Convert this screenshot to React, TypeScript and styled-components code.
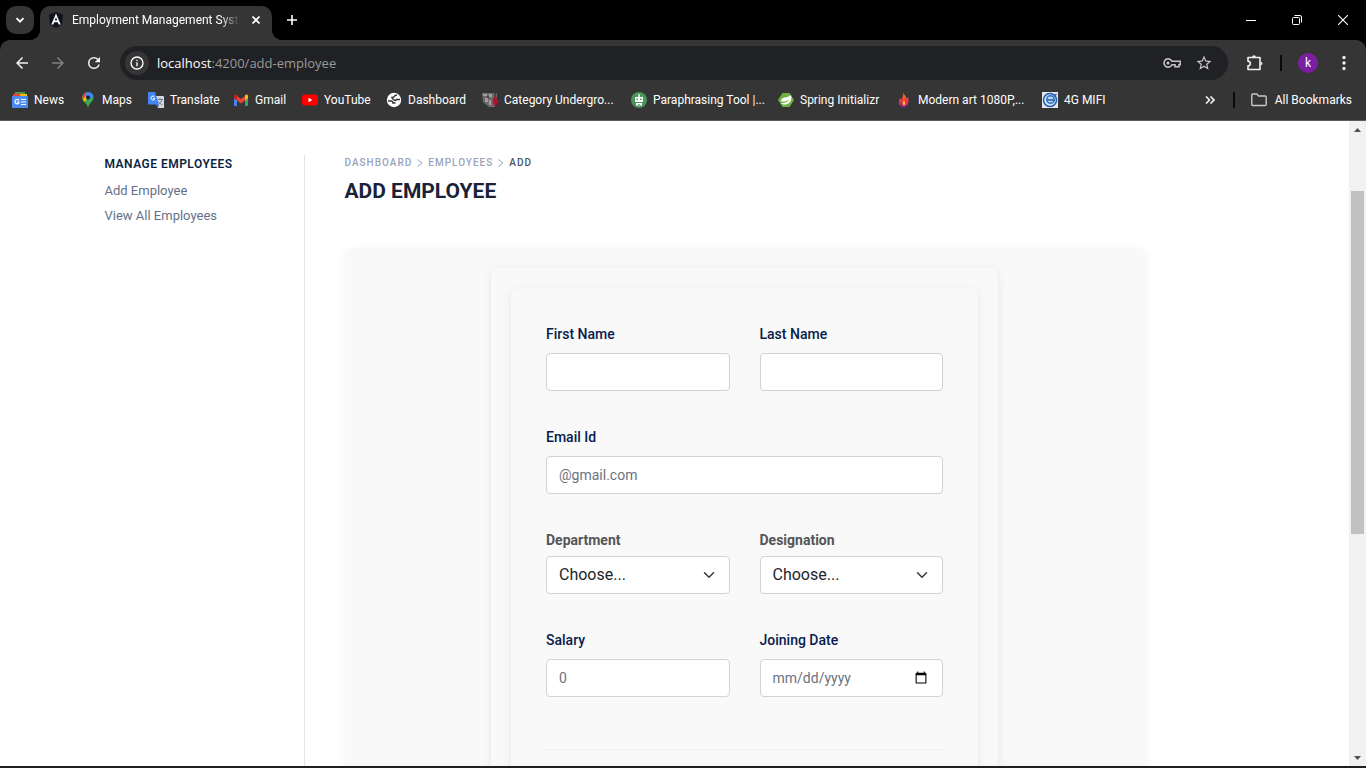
import React from "react";
import styled, { createGlobalStyle } from "styled-components";

const GlobalStyle = createGlobalStyle`
  *, *::before, *::after { box-sizing: border-box; }
  body { margin: 0; background: #fff; }
  button { font: inherit; color: inherit; border: 0; background: none; padding: 0; cursor: pointer; }
  a { color: inherit; text-decoration: none; }
  svg { display: block; flex: none; }
`;

/* ---------- browser frame ---------- */

const Browser = styled.div`
  display: flex;
  flex-direction: column;
  height: 100vh;
  overflow: hidden;
  background: #353535;
  color: #fff;
  font-family: Roboto, "Noto Sans", sans-serif;
  font-size: 12px;
  line-height: 16px;
`;

const TabStrip = styled.div`
  display: flex;
  height: 40px;
  padding-left: 6px;
  background: #000;
`;

const TabSearch = styled.button`
  display: grid;
  place-items: center;
  width: 28px;
  height: 28px;
  margin: 6px 6px 0 0;
  border-radius: 10px;
  background: #353535;
`;

const Tab = styled.div`
  position: relative;
  display: flex;
  align-items: center;
  gap: 8px;
  width: 232px;
  height: 34px;
  margin-top: 6px;
  padding: 0 8px 6px;
  border-radius: 10px 10px 0 0;
  background: #353535;

  &::before,
  &::after {
    content: "";
    position: absolute;
    bottom: 0;
    width: 10px;
    height: 10px;
  }
  &::before {
    left: -10px;
    background: radial-gradient(circle at 0 0, transparent 10px, #353535 10px);
  }
  &::after {
    right: -10px;
    background: radial-gradient(circle at 100% 0, transparent 10px, #353535 10px);
  }
`;

const TabTitle = styled.span`
  flex: 1;
  min-width: 0;
  overflow: hidden;
  white-space: nowrap;
  mask-image: linear-gradient(to right, #000 88%, transparent);
`;

const SmallButton = styled.button`
  display: grid;
  place-items: center;
  width: 16px;
  height: 16px;
`;

const NewTab = styled.button`
  display: grid;
  place-items: center;
  width: 28px;
  height: 28px;
  margin: 6px 0 0 6px;
`;

const WindowControls = styled.div`
  display: flex;
  margin-left: auto;
`;

const WindowButton = styled.button`
  display: grid;
  place-items: center;
  width: 46px;
  height: 40px;
`;

const ToolbarBack = styled.div`
  background: #000;
`;

const Toolbar = styled.div`
  display: flex;
  align-items: center;
  height: 46px;
  padding: 0 4px;
  border-radius: 10px 10px 0 0;
  background: #353535;
`;

const ToolButton = styled.button<{ $dim?: boolean }>`
  display: grid;
  place-items: center;
  width: 36px;
  height: 34px;
  color: ${(p) => (p.$dim ? "#808080" : "#f1f1f1")};
`;

const AddressBar = styled.div`
  display: flex;
  flex: 1;
  align-items: center;
  height: 34px;
  margin: 0 9px 0 8px;
  padding: 0 8px 0 5px;
  border-radius: 17px;
  background: #202124;
`;

const SiteInfo = styled.button`
  display: grid;
  place-items: center;
  width: 24px;
  height: 24px;
  margin-right: 8px;
  border-radius: 12px;
  background: #353535;
`;

const Address = styled.label`
  display: flex;
  flex: 1;
  font-family: "Open Sans", "Noto Sans", sans-serif;
  font-size: 13px;
  line-height: 20px;
`;

const AddressInput = styled.input`
  flex: 1;
  min-width: 0;
  padding: 0;
  border: 0;
  outline: 0;
  background: none;
  color: #9a9a9a;
  font: inherit;
`;

const BarButton = styled.button`
  display: grid;
  place-items: center;
  width: 32px;
  height: 28px;
  color: #c7c7c7;
`;

const Rule = styled.span<{ $before: number; $after: number }>`
  width: 2px;
  height: 16px;
  margin: 0 ${(p) => p.$after}px 0 ${(p) => p.$before}px;
  background: #0a0a0a;
`;

const Avatar = styled.button`
  width: 20px;
  height: 20px;
  margin-right: 8px;
  border-radius: 10px;
  background: #7b1fa2;
  line-height: 20px;
`;

const BookmarkBar = styled.nav`
  display: flex;
  align-items: center;
  height: 35px;
  padding: 0 14px 6px 12px;
  border-bottom: 1px solid #5c5c5c;
`;

const Bookmark = styled.a<{ $label: number }>`
  display: grid;
  grid-template-columns: 16px ${(p) => p.$label}px;
  gap: 6px;
  align-items: center;
  margin-right: 16px;
  white-space: nowrap;
`;

const BookmarkEnd = styled.div`
  display: flex;
  align-items: center;
  margin-left: auto;
`;

const AllBookmarks = styled.a`
  display: flex;
  align-items: center;
  gap: 8px;
  white-space: nowrap;
`;

/* ---------- page area ---------- */

const Viewport = styled.div`
  display: flex;
  flex: 1;
  min-height: 0;
  border-bottom: 2px solid #202020;
  background: #fff;
`;

const Page = styled.div`
  flex: 1;
  min-width: 0;
  overflow: hidden;
  color: #212529;
  font-family: Roboto, sans-serif;
`;

const Container = styled.div`
  display: flex;
  max-width: 1140px;
  margin: 0 auto;
  padding-top: 34px;
`;

const Sidebar = styled.nav`
  flex: none;
  width: 200px;
  border-right: 1px solid #e2e4ec;
`;

const SideTitle = styled.h2`
  margin: 0 0 4px;
  color: #0b1f3f;
  font-size: 12px;
  font-weight: 600;
  line-height: 19px;
  letter-spacing: 0.04em;
`;

const SideLink = styled.a`
  display: block;
  color: #64708a;
  font-size: 13px;
  line-height: 25px;
`;

const Main = styled.main`
  flex: 1;
  min-width: 0;
  padding-left: 40px;
`;

const Breadcrumb = styled.nav`
  display: flex;
  align-items: center;
  gap: 4px;
  color: #9aa4bd;
  font-size: 10px;
  font-weight: 500;
  line-height: 16px;
  letter-spacing: 1px;
`;

const Current = styled.span`
  color: #4b5568;
`;

const Title = styled.h1`
  margin: 4px 0 41px;
  color: #1a2238;
  font-size: 21px;
  font-weight: 700;
  line-height: 32px;
`;

const Card = styled.div<{ $width: number; $pad: number }>`
  max-width: ${(p) => p.$width}px;
  margin: 0 auto;
  padding: ${(p) => p.$pad}px;
  border-radius: 8px;
  background: #f9f9f9;
  box-shadow: 0 2px 10px rgba(0, 0, 0, 0.08);
`;

const OuterCard = styled(Card)`
  margin: 0;
  box-shadow: 0 2px 10px rgba(0, 0, 0, 0.05);
`;

const Form = styled.form`
  display: grid;
  grid-template-columns: 1fr 1fr;
  gap: 35px 30px;
`;

const Field = styled.div<{ $wide?: boolean }>`
  display: flex;
  flex-direction: column;
  min-width: 0;
  grid-column: ${(p) => (p.$wide ? "1 / -1" : "auto")};
`;

const Label = styled.label`
  margin-bottom: 8px;
  color: #07204d;
  font-size: 14px;
  font-weight: 500;
  line-height: 22px;
`;

const SelectLabel = styled(Label)`
  margin-bottom: 5px;
  color: #555;
  font-weight: 700;
`;

const Input = styled.input`
  width: 100%;
  height: 38px;
  padding: 0 12px;
  border: 1px solid #ced4da;
  border-radius: 4px;
  background: #fff;
  color: #6b7280;
  font-family: inherit;
  font-size: 14px;

  &::placeholder {
    color: #6b7280;
    opacity: 1;
  }
  &::-webkit-datetime-edit-month-field,
  &::-webkit-datetime-edit-day-field,
  &::-webkit-datetime-edit-year-field {
    padding: 0;
  }
`;

const SelectBox = styled.div`
  display: grid;
  grid-template-columns: 1fr 28px;
  align-items: center;

  svg {
    grid-area: 1 / 2;
    pointer-events: none;
  }
`;

const Select = styled.select`
  grid-area: 1 / 1 / 2 / 3;
  width: 100%;
  height: 38px;
  padding: 0 36px 2px 12px;
  border: 1px solid #ced4da;
  border-radius: 4px;
  appearance: none;
  background: #fff;
  color: #212529;
  font-family: inherit;
  font-size: 16px;
`;

const Divider = styled.hr`
  grid-column: 1 / -1;
  width: 100%;
  margin: 17px 0 35px;
  border: 0;
  border-top: 1px solid #efefef;
`;

const ScrollBar = styled.div`
  display: flex;
  flex-direction: column;
  flex: none;
  width: 17px;
  background: #f1f1f1;
`;

const ScrollArrow = styled.button`
  display: grid;
  place-items: center;
  height: 17px;
`;

const ScrollTrack = styled.div`
  display: grid;
  flex: 1;
  grid-template-rows: 53fr 343fr 215fr;
  padding: 0 2px;
`;

const ScrollThumb = styled.div`
  grid-row: 2;
  background: #c1c1c1;
`;

/* ---------- icons ---------- */

const Material = ({ d, size = 18 }: { d: string; size?: number }) => (
  <svg width={size} height={size} viewBox="0 0 24 24" fill="currentColor">
    <path d={d} />
  </svg>
);

const BACK = "M20 11H7.83l5.59-5.59L12 4l-8 8 8 8 1.41-1.41L7.83 13H20z";
const FORWARD = "M4 11h12.17l-5.59-5.59L12 4l8 8-8 8-1.41-1.41L16.17 13H4z";
const RELOAD =
  "M17.65 6.35A7.96 7.96 0 0 0 12 4a8 8 0 1 0 7.73 10h-2.08A6 6 0 1 1 12 6c1.66 0 3.14.69 4.22 1.78L13 11h7V4z";
const INFO =
  "M11 7h2v2h-2zm0 4h2v6h-2zm1-9a10 10 0 1 0 0 20 10 10 0 0 0 0-20zm0 18a8 8 0 1 1 0-16 8 8 0 0 1 0 16z";
const STAR =
  "M22 9.24l-7.19-.62L12 2 9.19 8.63 2 9.24l5.46 4.73L5.82 21 12 17.27 18.18 21l-1.63-7.03zM12 15.4l-3.76 2.27 1-4.28-3.32-2.88 4.38-.38L12 6.1l1.71 4.04 4.38.38-3.32 2.88 1 4.28z";

const Chevron = () => (
  <svg width="14" height="12" viewBox="0 0 16 16" fill="none" stroke="#343a40" strokeWidth="2" strokeLinecap="round" strokeLinejoin="round">
    <path d="m2 5 6 6 6-6" />
  </svg>
);

const Crumb = () => (
  <svg width="8" height="10" viewBox="0 0 8 10" fill="none" stroke="#9aa4bd">
    <path d="M1.500 1.500 6 5 1.500 8.500" />
  </svg>
);

const Favicon = () => (
  <svg width="16" height="16" viewBox="0 0 16 16">
    <path d="m8 0 7 2.500-1 10L8 16l-6-3.500-1-10z" fill="#10131f" />
    <path d="M8 1.500 3.300 12.500h2l.9-2.200h3.600l.9 2.200h2zm0 3.800 1.200 3.200H6.800z" fill="#fff" />
  </svg>
);

const NewsIcon = () => (
  <svg width="16" height="16" viewBox="0 0 16 16">
    <path d="M3 0h10v4H3z" fill="#34a853" />
    <path d="m1 2 8-1 1 4H1z" fill="#ea4335" />
    <path d="M8 2h7v3H8z" fill="#fbbc04" />
    <rect y="4" width="16" height="12" rx="1" fill="#4a8af4" />
    <path d="M7 8.300A2.200 2.200 0 1 0 7 11V10H5" stroke="#fff" strokeWidth="1.200" fill="none" />
    <path d="M9 7.500h5M9 10h5M9 12.500h5" stroke="#fff" strokeWidth="1.200" />
  </svg>
);

const MapsIcon = () => (
  <svg width="16" height="16" viewBox="0 0 16 16">
    <clipPath id="pin">
      <path d="M8 0a5.500 5.500 0 0 0-5.500 5.500C2.500 9.500 7 11 8 16c1-5 5.500-6.500 5.500-10.500A5.500 5.500 0 0 0 8 0z" />
    </clipPath>
    <g clipPath="url(#pin)">
      <path d="M0 0h16v16H0z" fill="#34a853" />
      <path d="M0 5.500 5 3l3 2.500L3 12H0z" fill="#fbbc04" />
      <path d="M0 0h8L3.500 7 0 5z" fill="#ea4335" />
      <path d="M6 0h10v3L8 8 5 3z" fill="#4285f4" />
    </g>
    <circle cx="8" cy="5.500" r="2" fill="#202124" />
  </svg>
);

const TranslateIcon = () => (
  <svg width="16" height="16" viewBox="0 0 16 16">
    <path d="M5 4h10a1 1 0 0 1 1 1v11h-6z" fill="#d5d8dc" />
    <path d="M1 0h6l4 12.500H1a1 1 0 0 1-1-1V1a1 1 0 0 1 1-1z" fill="#4285f4" />
    <path d="M6.500 4.800a2 2 0 1 0 0 2.600V6.500H5" stroke="#fff" fill="none" />
    <path d="M9.500 7.500H15M12 6v1.500m2 0c-.5 2-2 4-3.500 5m0-3c1 1.500 2.500 3 4 3.500" stroke="#607d8b" fill="none" />
    <path d="m8 12.500 2 3.500 1-3.500z" fill="#3367d6" />
  </svg>
);

const GmailIcon = () => (
  <svg width="16" height="16" viewBox="0 0 16 16">
    <path d="M1 3.500 4 5.500V14H2a1 1 0 0 1-1-1z" fill="#4285f4" />
    <path d="M15 3.500 12 5.500V14h2a1 1 0 0 0 1-1z" fill="#34a853" />
    <path d="M4 4v4.500l4 3 4-3V4L8 7z" fill="#ea4335" />
    <path d="M1 4c0-1.700 1.700-2 3-1v5.500L1 6.200z" fill="#c5221f" />
    <path d="M15 4c0-1.700-1.700-2-3-1v5.500l3-2.300z" fill="#fbbc04" />
  </svg>
);

const YouTubeIcon = () => (
  <svg width="16" height="16" viewBox="0 0 16 16">
    <rect y="2.500" width="16" height="11" rx="3" fill="#f00" />
    <path d="M6.500 5.800v4.400L10.300 8z" fill="#fff" />
  </svg>
);

const GlobeIcon = () => (
  <svg width="16" height="16" viewBox="0 0 16 16">
    <circle cx="8" cy="8" r="7.200" fill="#fff" />
    <path d="M2 9h3.500q1.500.3 1.500 2h2.500M14 7.500h-3.500q-1 1.500-2.500.5t-2-2.500q2 0 2.500-1.200T11 3" stroke="#353535" strokeWidth="1.500" fill="none" />
  </svg>
);

const CategoryIcon = () => (
  <svg width="16" height="16" viewBox="0 0 16 16">
    <path d="M0 1h15v4l-2 2v8H7L1 10z" fill="#6e6a6a" />
    <path d="M1 2h4v2H1zm6 0h3v3H7zM3 6h3v4H3zm4 2h2v5H7z" fill="#a39c9c" />
    <path d="M12 1h2v4h-2zM5 4h2v2H5z" fill="#444" />
    <path d="M11 6q4-2 5 2 0 5-3 6-3-2-2-8z" fill="#b3122f" />
  </svg>
);

const RobotIcon = () => (
  <svg width="16" height="16" viewBox="0 0 16 16">
    <circle cx="8" cy="8" r="8" fill="#499557" />
    <path d="M7.300 2h1.400v3H7.300zM4 5h8v5H4zM5 11h6v2.500H5z" fill="#fff" />
    <path d="M5.500 6.500h1.500v1.500H5.500zm3.500 0h1.500v1.500H9zM7 12h2v.800H7z" fill="#499557" />
  </svg>
);

const SpringIcon = () => (
  <svg width="16" height="16" viewBox="0 0 16 16">
    <path d="M4.500 1h7L16 8l-4.500 7h-7L0 8z" fill="#6db33f" />
    <path d="M13 3c1 4 0 9-5.500 9.500-2 .2-4-.5-4.500-1.500C9 11 10 9 11.500 7 9 9.500 6.500 9.500 3.200 9.800 2.500 4 10 6.500 13 3z" fill="#fff" />
  </svg>
);

const FlameIcon = () => (
  <svg width="16" height="16" viewBox="0 0 16 16">
    <defs>
      <linearGradient id="flame" x2="0" y2="1">
        <stop stopColor="#ff8a1f" />
        <stop offset=".5" stopColor="#ee4138" />
        <stop offset="1" stopColor="#8a1c8f" />
      </linearGradient>
    </defs>
    <path d="M7.500 0c0 3 3 4 3 7L12 5c1.500 5 .5 10-4 10.500C3 15.500 1.500 10 4 6l1 2c1.500-2 2.500-5 2.500-8z" fill="url(#flame)" />
    <path d="M8 8c1.500 2.500 2 5 0 5.500C6 13 6.500 10.500 8 8z" fill="#ffb02e" />
  </svg>
);

const MifiIcon = () => (
  <svg width="16" height="16" viewBox="0 0 16 16">
    <path d="M0 0h16v16H0z" fill="#e4e8ee" />
    <circle cx="8" cy="8" r="6.500" fill="none" stroke="#1f5fae" strokeWidth="1.500" />
    <circle cx="8.500" cy="7.500" r="3.800" fill="#bcd6f2" stroke="#2b73c6" strokeWidth="1.500" />
    <path d="M5 8h7.500M12 4l2.500-2" fill="none" stroke="#1f5fae" strokeWidth="1.500" />
  </svg>
);

const bookmarks = [
  { name: "News", label: 30, Icon: NewsIcon },
  { name: "Maps", label: 30, Icon: MapsIcon },
  { name: "Translate", label: 47, Icon: TranslateIcon },
  { name: "Gmail", label: 31, Icon: GmailIcon },
  { name: "YouTube", label: 46, Icon: YouTubeIcon },
  { name: "Dashboard", label: 58, Icon: GlobeIcon },
  { name: "Category Undergro...", label: 111, Icon: CategoryIcon },
  { name: "Paraphrasing Tool |...", label: 109, Icon: RobotIcon },
  { name: "Spring Initializr", label: 80, Icon: SpringIcon },
  { name: "Modern art 1080P,...", label: 108, Icon: FlameIcon },
  { name: "4G MIFI", label: 42, Icon: MifiIcon },
];

const BrowserHeader = () => (
  <>
    <TabStrip>
      <TabSearch aria-label="Search tabs">
        <svg width="10" height="10" viewBox="0 0 10 10" fill="none" stroke="#fff" strokeWidth="1.800">
          <path d="m1.500 3.200 3.500 3.500 3.500-3.500" />
        </svg>
      </TabSearch>
      <Tab>
        <Favicon />
        <TabTitle>Employment Management System</TabTitle>
        <SmallButton aria-label="Close tab">
          <svg width="8" height="8" viewBox="0 0 8 8" stroke="#fff" strokeWidth="1.600">
            <path d="m.5.500 7 7m0-7-7 7" />
          </svg>
        </SmallButton>
      </Tab>
      <NewTab aria-label="New tab">
        <svg width="10" height="10" viewBox="0 0 10 10" stroke="#fff" strokeWidth="1.600">
          <path d="M5 0v10M0 5h10" />
        </svg>
      </NewTab>
      <WindowControls>
        <WindowButton aria-label="Minimize">
          <svg width="10" height="10" viewBox="0 0 10 10" stroke="#fff">
            <path d="M0 5.500h10" />
          </svg>
        </WindowButton>
        <WindowButton aria-label="Restore">
          <svg width="10" height="10" viewBox="0 0 10 10" fill="none" stroke="#fff">
            <rect x=".5" y="2.500" width="7" height="7" rx="1" />
            <path d="M2.500.500H8A1.500 1.500 0 0 1 9.500 2v5.500" />
          </svg>
        </WindowButton>
        <WindowButton aria-label="Close">
          <svg width="10" height="10" viewBox="0 0 10 10" stroke="#fff" strokeWidth="1.100">
            <path d="m0 0 10 10M10 0 0 10" />
          </svg>
        </WindowButton>
      </WindowControls>
    </TabStrip>
    <ToolbarBack>
      <Toolbar>
        <ToolButton aria-label="Back"><Material d={BACK} /></ToolButton>
        <ToolButton aria-label="Forward" $dim><Material d={FORWARD} /></ToolButton>
        <ToolButton aria-label="Reload"><Material d={RELOAD} /></ToolButton>
        <AddressBar>
          <SiteInfo aria-label="Site information"><Material d={INFO} size={16} /></SiteInfo>
          <Address>
            <span>localhost</span>
            <AddressInput aria-label="Address" defaultValue=":4200/add-employee" />
          </Address>
          <BarButton aria-label="Passwords">
            <svg width="18" height="12" viewBox="0 0 18 12" fill="none" stroke="currentColor" strokeWidth="1.500">
              <path d="M9 4.200A4.200 4.200 0 1 0 9 7.800h3v2h4v-2h1.200V4.200z" />
              <circle cx="5" cy="6" r="1.500" fill="currentColor" stroke="none" />
            </svg>
          </BarButton>
          <BarButton aria-label="Bookmark this tab"><Material d={STAR} /></BarButton>
        </AddressBar>
        <ToolButton aria-label="Extensions">
          <svg width="18" height="18" viewBox="0 0 18 18" fill="none" stroke="currentColor" strokeWidth="1.600" strokeLinejoin="round">
            <path d="M2 3.500h12v12H2v-3.700a2.200 2.200 0 0 0 0-4.600z" />
            <path d="M6.200 3a1.800 1.800 0 0 1 3.600 0zM14.600 7.700a1.800 1.800 0 0 1 0 3.600z" fill="currentColor" stroke="none" />
          </svg>
        </ToolButton>
        <Rule $before={7} $after={16} />
        <Avatar aria-label="Profile">k</Avatar>
        <ToolButton aria-label="Menu">
          <svg width="4" height="16" viewBox="0 0 4 16" fill="currentColor">
            <circle cx="2" cy="2.500" r="1.700" />
            <circle cx="2" cy="8" r="1.700" />
            <circle cx="2" cy="13.500" r="1.700" />
          </svg>
        </ToolButton>
      </Toolbar>
    </ToolbarBack>
    <BookmarkBar aria-label="Bookmarks">
      {bookmarks.map(({ name, label, Icon }) => (
        <Bookmark key={name} href="#" $label={label}>
          <Icon />
          {name}
        </Bookmark>
      ))}
      <BookmarkEnd>
        <SmallButton aria-label="More bookmarks">
          <svg width="10" height="8" viewBox="0 0 10 8" fill="none" stroke="#f1f1f1" strokeWidth="1.600">
            <path d="m1 .5 3.500 3.500L1 7.500M5.500.500 9 4 5.500 7.500" />
          </svg>
        </SmallButton>
        <Rule $before={15} $after={16} />
        <AllBookmarks href="#">
          <svg width="16" height="14" viewBox="0 0 16 14" fill="none" stroke="#c7c7c7" strokeWidth="1.400">
            <path d="M.8 2a1 1 0 0 1 1-1h4l1.700 2h6.700a1 1 0 0 1 1 1v7.500a1 1 0 0 1-1 1H1.800a1 1 0 0 1-1-1z" />
          </svg>
          All Bookmarks
        </AllBookmarks>
      </BookmarkEnd>
    </BookmarkBar>
  </>
);

const ChoiceField = ({ id, label }: { id: string; label: string }) => (
  <Field>
    <SelectLabel htmlFor={id}>{label}</SelectLabel>
    <SelectBox>
      <Select id={id}>
        <option>Choose...</option>
      </Select>
      <Chevron />
    </SelectBox>
  </Field>
);

const EmployeeForm = () => (
  <Form>
    <Field>
      <Label htmlFor="first">First Name</Label>
      <Input id="first" />
    </Field>
    <Field>
      <Label htmlFor="last">Last Name</Label>
      <Input id="last" />
    </Field>
    <Field $wide>
      <Label htmlFor="email">Email Id</Label>
      <Input id="email" type="email" placeholder="@gmail.com" />
    </Field>
    <ChoiceField id="department" label="Department" />
    <ChoiceField id="designation" label="Designation" />
    <Field>
      <Label htmlFor="salary">Salary</Label>
      <Input id="salary" placeholder="0" inputMode="numeric" />
    </Field>
    <Field>
      <Label htmlFor="joined">Joining Date</Label>
      <Input id="joined" type="date" />
    </Field>
    <Divider />
  </Form>
);

export default function App() {
  return (
    <Browser>
      <GlobalStyle />
      <BrowserHeader />
      <Viewport>
        <Page>
          <Container>
            <Sidebar>
              <SideTitle>MANAGE EMPLOYEES</SideTitle>
              <SideLink href="#">Add Employee</SideLink>
              <SideLink href="#">View All Employees</SideLink>
            </Sidebar>
            <Main>
              <Breadcrumb aria-label="Breadcrumb">
                <a href="#">DASHBOARD</a>
                <Crumb />
                <a href="#">EMPLOYEES</a>
                <Crumb />
                <Current>ADD</Current>
              </Breadcrumb>
              <Title>ADD EMPLOYEE</Title>
              <OuterCard $width={800} $pad={20}>
                <Card $width={507} $pad={20}>
                  <Card $width={467} $pad={35}>
                    <EmployeeForm />
                  </Card>
                </Card>
              </OuterCard>
            </Main>
          </Container>
        </Page>
        <ScrollBar>
          <ScrollArrow aria-label="Scroll up">
            <svg width="7" height="4" viewBox="0 0 7 4" fill="#505050"><path d="M0 4h7L3.500 0z" /></svg>
          </ScrollArrow>
          <ScrollTrack>
            <ScrollThumb />
          </ScrollTrack>
          <ScrollArrow aria-label="Scroll down">
            <svg width="7" height="4" viewBox="0 0 7 4" fill="#505050"><path d="M0 0h7L3.500 4z" /></svg>
          </ScrollArrow>
        </ScrollBar>
      </Viewport>
    </Browser>
  );
}
